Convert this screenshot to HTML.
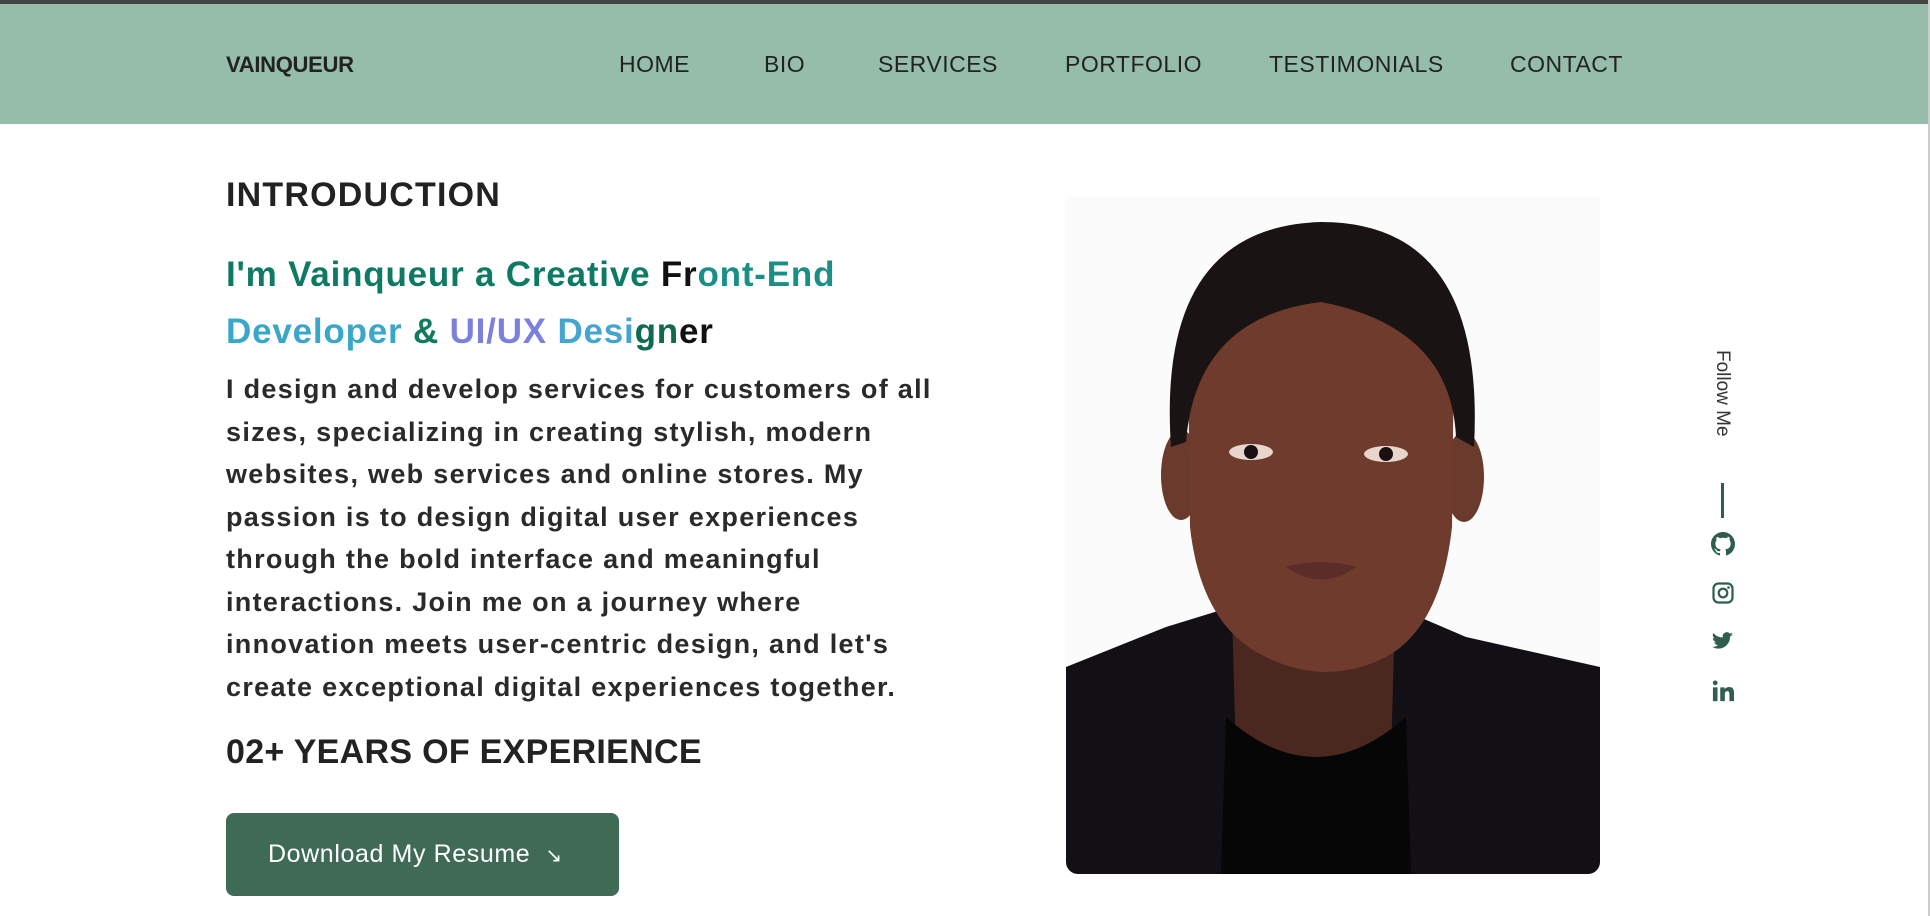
<!DOCTYPE html>
<html><head><meta charset="utf-8"><style>
*{margin:0;padding:0;box-sizing:border-box}
html,body{width:1930px;height:916px;overflow:hidden;background:#fff;font-family:"Liberation Sans",sans-serif;color:#222}
.top{position:absolute;left:0;top:0;width:1930px;height:4px;background:#444}
.nav{position:absolute;left:0;top:4px;width:1928px;height:120px;background:#95bdaa}
.edge{position:absolute;right:0;top:0;width:2px;height:916px;background:#ccc}
.logo{position:absolute;left:226px;top:52px;font-size:22px;font-weight:bold;letter-spacing:-0.3px;color:#222}
.nl{position:absolute;top:51px;font-size:23px;color:#222;letter-spacing:0.5px}
h2{position:absolute;left:226px;font-size:34px;font-weight:bold;color:#222;letter-spacing:1.2px}
.head{position:absolute;left:226px;top:246px;font-size:35px;font-weight:bold;line-height:57px;width:760px;letter-spacing:0.8px}
.p{position:absolute;left:226px;top:368px;width:718px;font-size:27px;font-weight:bold;line-height:42.5px;color:#2a2a2a;letter-spacing:1.3px}
.btn{position:absolute;left:226px;top:813px;width:393px;height:83px;background:#3f6b56;border-radius:8px;color:#fff;font-size:25px;line-height:83px;padding-left:42px;letter-spacing:0.6px}
.photo{position:absolute;left:1066px;top:197px;width:534px;height:677px;border-radius:0 0 12px 12px;overflow:hidden}
.follow{position:absolute;left:1711px;top:350px;writing-mode:vertical-rl;font-size:19px;color:#333}
.line{position:absolute;left:1721px;top:483px;width:3px;height:35px;background:#2f5e4e}
.ic{position:absolute;left:1711px}
</style></head><body>
<div class="top"></div>
<div class="nav"></div>
<div class="edge"></div>
<div class="logo">VAINQUEUR</div>
<span class="nl" style="left:619px">HOME</span>
<span class="nl" style="left:764px">BIO</span>
<span class="nl" style="left:878px">SERVICES</span>
<span class="nl" style="left:1065px">PORTFOLIO</span>
<span class="nl" style="left:1269px">TESTIMONIALS</span>
<span class="nl" style="left:1510px">CONTACT</span>

<h2 style="top:176px">INTRODUCTION</h2>
<div class="head"><span style="color:#0e7a63">I'm Vainqueur a Creative </span><span style="color:#111">Fr</span><span style="color:#1a8f86">ont-End</span><br><span style="color:#3aa6c9">Developer </span><span style="color:#127a5e">&amp; </span><span style="color:#7b7fe0">UI/UX </span><span style="color:#45a4d0">Desi</span><span style="color:#0f6b4f">gn</span><span style="color:#111">er</span></div>
<div class="p">I design and develop services for customers of all sizes, specializing in creating stylish, modern websites, web services and online stores. My passion is to design digital user experiences through the bold interface and meaningful interactions. Join me on a journey where innovation meets user-centric design, and let's create exceptional digital experiences together.</div>
<h2 style="top:733px;letter-spacing:0.3px">02+ YEARS OF EXPERIENCE</h2>
<div class="btn">Download My Resume &nbsp;<span style="font-size:20px">↘</span></div>

<div class="photo">
<svg width="534" height="677" viewBox="0 0 534 677">
<rect width="534" height="677" fill="#fbfbfc"/>
<path d="M0 470 L100 430 L165 410 L330 410 L400 440 L534 470 L534 677 L0 677Z" fill="#121014"/>
<ellipse cx="115" cy="278" rx="20" ry="45" fill="#6a3a2c"/>
<ellipse cx="398" cy="280" rx="20" ry="45" fill="#6a3a2c"/>
<path d="M165 380 L330 380 L325 560 L250 600 L170 560Z" fill="#4a271f"/>
<path d="M122 150 Q125 90 254 90 Q386 90 388 150 L386 330 Q375 430 320 460 Q260 490 200 460 Q135 430 124 330Z" fill="#6e3b2c"/>
<path d="M105 250 Q90 30 255 25 Q420 25 408 250 L390 240 Q385 130 255 105 Q130 120 120 245Z" fill="#1a1314"/>
<ellipse cx="185" cy="255" rx="22" ry="8" fill="#e8d6cc"/><circle cx="185" cy="255" r="7" fill="#1a0f12"/>
<ellipse cx="320" cy="257" rx="22" ry="8" fill="#e8d6cc"/><circle cx="320" cy="257" r="7" fill="#1a0f12"/>
<path d="M220 370 Q255 360 290 370 Q255 395 220 370Z" fill="#5b2c28"/>
<path d="M160 520 Q250 600 340 520 L345 677 L155 677Z" fill="#070607"/>
</svg>
</div>

<div class="follow">Follow Me</div>
<div class="line"></div>
<svg class="ic" style="top:532px" width="24" height="24" viewBox="0 0 16 16"><path fill="#2f5e4e" d="M8 0C3.58 0 0 3.58 0 8c0 3.54 2.290 6.53 5.47 7.59.4.07.55-.17.55-.38v-1.33c-2.23.48-2.7-1.07-2.7-1.07-.36-.92-.89-1.170-.89-1.17-.73-.5.05-.49.05-.49.8.06 1.23.83 1.23.83.72 1.22 1.87.87 2.330.66.07-.52.28-.87.51-1.07-1.78-.2-3.64-.89-3.64-3.95 0-.87.31-1.59.82-2.15-.08-.2-.36-1.020.08-2.12 0 0 .67-.21 2.2.82A7.6 7.6 0 018 3.86c.68 0 1.36.09 2 .27 1.53-1.04 2.2-.82 2.2-.82.44 1.1.16 1.92.08 2.12.51.56.82 1.27.82 2.15 0 3.07-1.87 3.75-3.65 3.95.29.25.54.73.54 1.48v2.2c0 .21.15.46.55.38A8 8 0 0016 8c0-4.42-3.58-8-8-8z"/></svg>
<svg class="ic" style="top:581px" width="24" height="24" viewBox="0 0 24 24"><rect x="2.5" y="2.5" width="19" height="19" rx="5" fill="none" stroke="#2f5e4e" stroke-width="2.2"/><circle cx="12" cy="12" r="4.3" fill="none" stroke="#2f5e4e" stroke-width="2.2"/><circle cx="17.5" cy="6.5" r="1.3" fill="#2f5e4e"/></svg>
<svg class="ic" style="top:630px" width="24" height="22" viewBox="0 0 24 24"><path fill="#2f5e4e" d="M23 4.6a9 9 0 01-2.6.7 4.5 4.5 0 002-2.5 9 9 0 01-2.9 1.1 4.5 4.5 0 00-7.7 4.1A12.8 12.8 0 011.5 3.3a4.5 4.5 0 001.4 6 4.5 4.5 0 01-2-.6v.1a4.5 4.5 0 003.6 4.4 4.5 4.5 0 01-2 .1 4.5 4.5 0 004.2 3.1A9 9 0 010 18.3 12.8 12.8 0 006.9 20.3c8.3 0 12.8-6.9 12.8-12.8v-.6A9 9 0 0023 4.6z"/></svg>
<svg class="ic" style="top:680px" width="24" height="22" viewBox="0 0 24 24"><path fill="#2f5e4e" d="M1 8h5v15H1zM3.5 0.5a2.6 2.6 0 110 5.2 2.6 2.6 0 010-5.2zM9 8h4.8v2.1c.7-1.3 2.3-2.5 4.7-2.5 5 0 5.5 3.2 5.5 7.4V23h-5v-7c0-1.7 0-3.8-2.3-3.8S14 14 14 15.8V23H9z"/></svg>
</body></html>
